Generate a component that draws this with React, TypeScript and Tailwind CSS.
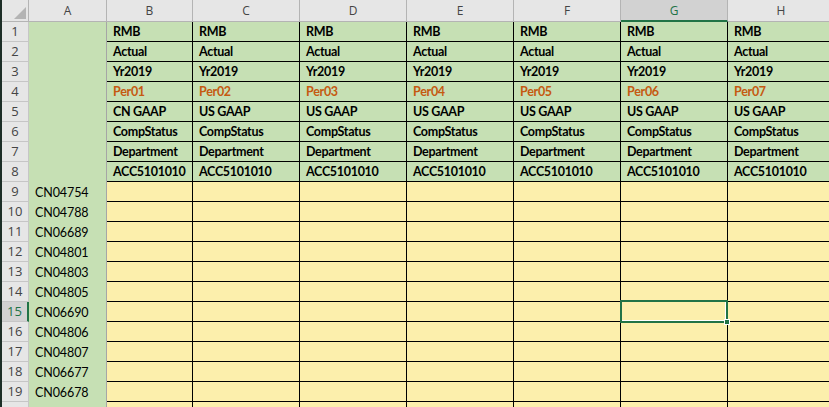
const letters = ["B", "C", "D", "E", "F", "G", "H"];

const labelRows: { n: number; text: (i: number) => string; orange?: boolean }[] = [
  { n: 1, text: () => "RMB" },
  { n: 2, text: () => "Actual" },
  { n: 3, text: () => "Yr2019" },
  { n: 4, text: (i) => `Per0${i + 1}`, orange: true },
  { n: 5, text: (i) => (i === 0 ? "CN GAAP" : "US GAAP") },
  { n: 6, text: () => "CompStatus" },
  { n: 7, text: () => "Department" },
  { n: 8, text: () => "ACC5101010" },
];

const codes = [
  "CN04754",
  "CN04788",
  "CN06689",
  "CN04801",
  "CN04803",
  "CN04805",
  "CN06690",
  "CN04806",
  "CN04807",
  "CN06677",
  "CN06678",
  "",
];

function RowHead({ n, selected }: { n: number; selected?: boolean }) {
  return (
    <div
      className={
        selected
          ? "w-[27px] shrink-0 h-[20px] flex items-center justify-center bg-[#d2d2d2] text-[#217346] border-b border-b-[#c6c6c6] border-r-2 border-r-[#217346] text-[13px] font-['Open_Sans',sans-serif]"
          : "w-[27px] shrink-0 h-[20px] flex items-center justify-center bg-[#e6e6e6] text-[#444444] border-b border-r border-[#c6c6c6] text-[13px] font-['Open_Sans',sans-serif]"
      }
    >
      {n < 20 ? n : null}
    </div>
  );
}

function ColA({ text }: { text?: string }) {
  return (
    <div className="w-[78px] shrink-0 h-[20px] flex items-center pl-[6px] pt-[2px] bg-[#c6e0b4] border-r border-[#a6a6a6] text-[12.5px] tracking-[-0.1px] text-black">
      {text}
    </div>
  );
}

function Cell({ i, children, className = "" }: { i: number; children?: React.ReactNode; className?: string }) {
  return (
    <div
      className={`${i === 0 ? "w-[86px]" : "w-[107px]"} shrink-0 h-[20px] flex items-center pl-[6px] pt-[2px] border-r border-b border-black whitespace-nowrap ${className}`}
    >
      {children}
    </div>
  );
}

export default function App() {
  return (
    <div className="w-[829px] h-[407px] overflow-hidden flex bg-white font-[Lato,sans-serif]">
      <div className="w-[2px] shrink-0 bg-[#1d2e27]" />
      <div className="flex flex-col">
        {/* column headers */}
        <div className="flex h-[22px] shrink-0 font-['Open_Sans',sans-serif] text-[12px] text-[#444444]">
          <div className="w-[27px] shrink-0 bg-[#e6e6e6] border-b border-r border-[#b4b4b4] relative">
            <svg className="absolute right-[2px] bottom-[2px]" width="12" height="12" viewBox="0 0 12 12">
              <polygon points="12,0 12,12 0,12" fill="#b4b4b4" />
            </svg>
          </div>
          <div className="w-[78px] shrink-0 bg-[#e6e6e6] border-b border-r border-[#b4b4b4] flex items-center justify-center">
            A
          </div>
          {letters.map((l, i) =>
            l === "G" ? (
              <div
                key={l}
                className="w-[107px] shrink-0 bg-[#d2d2d2] border-r border-r-[#b4b4b4] border-b-2 border-b-[#217346] text-[#217346] flex items-center justify-center pt-[1px]"
              >
                {l}
              </div>
            ) : (
              <div
                key={l}
                className={`${i === 0 ? "w-[86px]" : "w-[107px]"} shrink-0 bg-[#e6e6e6] border-b border-r border-[#b4b4b4] flex items-center justify-center`}
              >
                {l}
              </div>
            )
          )}
        </div>

        {/* label rows */}
        {labelRows.map((r) => (
          <div key={r.n} className="flex shrink-0">
            <RowHead n={r.n} />
            <ColA />
            {letters.map((l, i) => (
              <Cell
                key={l}
                i={i}
                className={`bg-[#c6e0b4] font-bold text-[12.5px] tracking-[-0.3px] ${r.orange ? "text-[#c55a11]" : "text-black"}`}
              >
                {r.text(i)}
              </Cell>
            ))}
          </div>
        ))}

        {/* data rows */}
        {codes.map((c, k) => {
          const n = k + 9;
          return (
            <div key={n} className="flex shrink-0">
              <RowHead n={n} selected={n === 15} />
              <ColA text={c} />
              {letters.map((l, i) => (
                <Cell key={l} i={i} className="bg-[#fcefac] relative">
                  {n === 15 && l === "G" && (
                    <div className="absolute z-10 -left-[1px] -top-[2px] w-[108px] h-[23px] border-2 border-[#217346] shadow-[inset_-1px_-1px_0_#ffffff]">
                      <div className="absolute -right-[4px] -bottom-[4px] w-[6px] h-[6px] bg-[#217346] border border-white" />
                    </div>
                  )}
                </Cell>
              ))}
            </div>
          );
        })}
      </div>
    </div>
  );
}
